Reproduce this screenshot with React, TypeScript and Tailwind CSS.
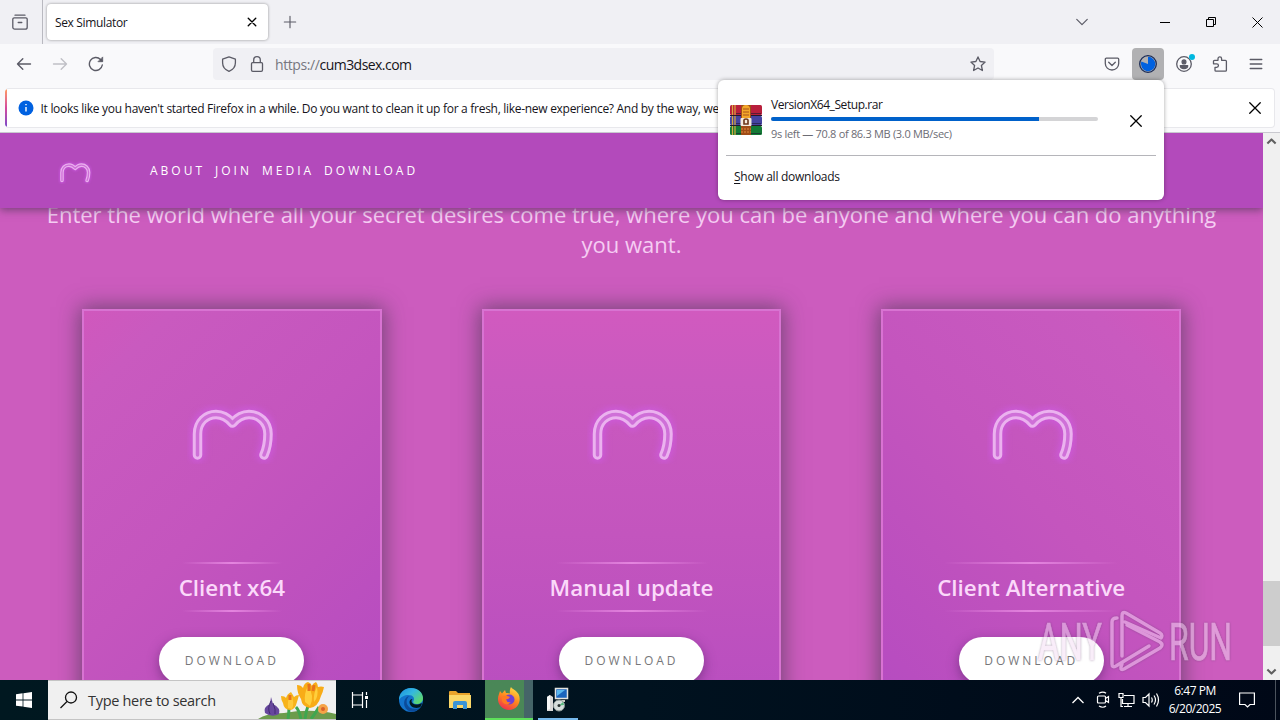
import type { ReactNode } from 'react'

const LINKS = ['ABOUT', 'JOIN', 'MEDIA', 'DOWNLOAD']

const CARDS = [
  {
    title: 'Client x64',
    bg: 'bg-[linear-gradient(135deg,#d058bd_0%,#c95abf_12%,#c455be_45%,#be51be_65%,#b84dc0_85%,#b24cc0_100%)]',
    line: 'w-[100px]',
  },
  {
    title: 'Manual update',
    bg: 'bg-[linear-gradient(180deg,#d15abf_0%,#ca59bf_16%,#c355be_50%,#b54cc0_100%)]',
    line: 'w-[152px]',
  },
  {
    title: 'Client Alternative',
    bg: 'bg-[linear-gradient(225deg,#d058bd_0%,#c95abf_12%,#c455be_45%,#be51be_65%,#b84dc0_85%,#b24cc0_100%)]',
    line: 'w-[174px]',
  },
]

export default function App() {
  return (
    <div className="relative flex h-[720px] w-[1280px] flex-col overflow-hidden bg-[#f9f9fb] font-['Open_Sans','Noto_Sans',sans-serif] text-[12px] text-[#15141a]">
      <TabBar />
      <Toolbar />
      <Notice />
      <div className="flex h-[547px] shrink-0">
        <Site />
        <Scrollbar />
      </div>
      <Taskbar />
      <DownloadPanel />
      <Watermark />
    </div>
  )
}

function Icon({ children, className = '', size = 16 }: { children: ReactNode; className?: string; size?: number }) {
  return (
    <svg
      width={size}
      height={size}
      viewBox="0 0 16 16"
      fill="none"
      stroke="currentColor"
      strokeWidth="1.3"
      strokeLinecap="round"
      strokeLinejoin="round"
      className={`shrink-0 ${className}`}
    >
      {children}
    </svg>
  )
}

function TabBar() {
  return (
    <header className="flex h-11 shrink-0 items-center bg-[#f0f0f4] text-[#5b5b66]">
      <div className="flex h-full w-[43px] items-center justify-center border-r border-[#b9b9c0]">
        <Icon className="mr-0.5">
          <path d="M3 1.200h10M2.200 3.800h11.600a1.400 1.400 0 0 1 1.400 1.400v8a2 2 0 0 1-2 2H2.800a2 2 0 0 1-2-2v-8a1.400 1.400 0 0 1 1.400-1.400zM6.200 8.500h3.600" />
        </Icon>
      </div>
      <div className="ml-1 flex h-9 w-[221px] items-center justify-between rounded bg-white pl-2 pr-[11px] text-[#15141a] shadow-[0_0_3px_rgba(0,0,0,0.4)]">
        <span className="pt-0.5 tracking-[-0.35px]">Sex Simulator</span>
        <Icon size={10} className="text-black">
          <path strokeWidth="2.200" d="M2 2l12 12M14 2L2 14" />
        </Icon>
      </div>
      <Icon size={14} className="ml-[15px]">
        <path d="M8 1.500v13M1.500 8h13" />
      </Icon>
      <Icon size={14} className="ml-auto mr-[53px]">
        <path strokeWidth="1.400" d="M2 5l6 6 6-6" />
      </Icon>
      <div className="flex h-full text-black">
        <div className="flex w-[46px] items-center justify-center">
          <div className="h-px w-2.5 bg-black" />
        </div>
        <div className="flex w-[46px] items-center justify-center">
          <svg width="10" height="10" fill="none" stroke="currentColor">
            <path d="M.5 2.500h7v7h-7zM2.500 2.500v-2h7v7h-2" />
          </svg>
        </div>
        <div className="flex w-[46px] items-center justify-center">
          <svg width="11" height="11" fill="none" stroke="currentColor">
            <path d="M.5.5l10 10M10.500.5l-10 10" />
          </svg>
        </div>
      </div>
    </header>
  )
}

function ToolButton({ children, active = false }: { children: ReactNode; active?: boolean }) {
  return (
    <div className="flex h-8 w-9 items-center justify-center">
      <div className={`relative flex h-8 w-8 items-center justify-center rounded ${active ? 'bg-[#b1b1b3]' : ''}`}>{children}</div>
    </div>
  )
}

function Toolbar() {
  return (
    <div className="flex h-10 shrink-0 items-center bg-[#f9f9fb] px-1.5 text-[#5b5b66]">
      <ToolButton>
        <Icon>
          <path strokeWidth="1.400" d="M14.500 8h-13M6.800 2.700L1.500 8l5.300 5.300" />
        </Icon>
      </ToolButton>
      <ToolButton>
        <Icon className="text-[#c0c0c6]">
          <path strokeWidth="1.400" d="M1.500 8h13M9.200 2.700L14.500 8l-5.300 5.300" />
        </Icon>
      </ToolButton>
      <ToolButton>
        <Icon>
          <path strokeWidth="1.400" d="M14.300 9a6.500 6.500 0 1 1-1.800-5.600l1.600 1.600" />
          <path fill="currentColor" strokeWidth=".8" d="M14.700 1.300v4.400h-4.400z" />
        </Icon>
      </ToolButton>
      <div className="ml-[99px] flex h-8 w-[781px] items-center rounded bg-[#f0f0f4] px-2">
        <Icon>
          <path d="M8 .9l6.400 2.300v3.500c0 3.800-2.400 7-6.400 8.600-4-1.600-6.400-4.800-6.400-8.600V3.200z" />
        </Icon>
        <Icon className="ml-3">
          <path d="M3.500 6.700h9a1 1 0 0 1 1 1V14a1.300 1.300 0 0 1-1.300 1.300H3.800A1.300 1.300 0 0 1 2.500 14V7.700a1 1 0 0 1 1-1zM4.700 6.500V4a3.300 3.300 0 0 1 6.600 0v2.500" />
        </Icon>
        <span className="ml-2.5 pt-px text-[14px] tracking-[-0.55px] text-[#77777f]">
          <span className="tracking-[-0.4px]">https://</span>
          <span className="text-[#15141a]">cum3dsex.com</span>
        </span>
        <Icon className="ml-auto">
          <path d="M8 .9l2.100 4.600 5 .6-3.700 3.400 1 5L8 12l-4.400 2.500 1-5L.9 6.100l5-.6z" />
        </Icon>
      </div>
      <div className="ml-auto flex">
        <ToolButton>
          <Icon>
            <path d="M2.300 2.200h11.400a1 1 0 0 1 1 1v4.300a6.700 6.500 0 0 1-13.400 0V3.200a1 1 0 0 1 1-1zM4.700 6.300L8 9.500l3.300-3.200" />
          </Icon>
        </ToolButton>
        <ToolButton active>
          <svg width="20" height="20" viewBox="0 0 20 20">
            <circle cx="10" cy="10" r="8.300" fill="#b1b1b3" stroke="#1b2b55" strokeWidth="1.300" />
            <path d="M10 10V2.800A7.200 7.200 0 1 1 3.300 7.600z" fill="#0061e0" />
          </svg>
        </ToolButton>
        <ToolButton>
          <Icon>
            <circle cx="8" cy="8" r="7.300" />
            <circle cx="8" cy="5.900" r="1.900" fill="currentColor" />
            <path fill="currentColor" d="M4.300 9.700h7.400c0 1.600-1.500 2.800-3.700 2.800s-3.700-1.200-3.700-2.800z" />
          </Icon>
          <span className="absolute right-[5px] top-1.5 h-1.5 w-1.5 rounded-full bg-[#00b8e0]" />
        </ToolButton>
        <ToolButton>
          <Icon>
            <path d="M6 4.300V2.700a1.800 1.800 0 0 1 3.600 0v1.600h3.800a1 1 0 0 1 1 1v8.900a1 1 0 0 1-1 1H4a1 1 0 0 1-1-1v-2.900h1.700a1.700 1.700 0 0 0 0-3.500H1.500V5.300a1 1 0 0 1 1-1z" />
          </Icon>
        </ToolButton>
        <ToolButton>
          <Icon>
            <path d="M2.200 3.500h11.600M2.200 8h11.600M2.200 12.500h11.600" />
          </Icon>
        </ToolButton>
      </div>
    </div>
  )
}

function Notice() {
  return (
    <div className="h-[49px] shrink-0 border-b border-[#c9c9cf] px-[5px] pt-1">
      <div className="flex h-[40px] items-center overflow-hidden rounded border border-l-0 border-[#e8e8ec] bg-white">
        <div className="h-full w-0.5 bg-linear-to-b from-[#ff9a5c] via-[#d4479c] to-[#7a45c8]" />
        <svg width="16" height="16" className="ml-[11px] shrink-0">
          <circle cx="8" cy="8" r="7.500" fill="#0061e0" />
          <path d="M8 7v4.500M8 4v1.300" stroke="white" strokeWidth="1.400" />
        </svg>
        <span className="ml-[6.500px] w-[760px] overflow-hidden pt-0.5 tracking-[-0.29px] whitespace-nowrap">
          It looks like you haven't started Firefox in a while. Do you want to clean it up for a fresh, like-new experience? And by the way, welcome back!
        </span>
        <Icon size={14} className="ml-auto mr-3 text-black">
          <path strokeWidth="1.500" d="M2 2l12 12M14 2L2 14" />
        </Icon>
      </div>
    </div>
  )
}

function Logo({ className }: { className: string }) {
  const arch = 'M10.500 51V30C10.500 18 19 10.500 29 10.500 37 10.500 42 15 45.500 19 49 15 54 10.500 62 10.500 72 10.500 81 18 81 30q0 12-4 21'

  return (
    <svg viewBox="0 0 90 60" fill="none" strokeLinecap="round" strokeLinejoin="round" className={className}>
      <path d={arch} stroke="#cf5be8" strokeOpacity=".6" strokeWidth="15" className="blur-[3px]" />
      <path d={arch} stroke="#ebb2ef" strokeWidth="9.500" className="blur-[0.600px]" />
      <path d={arch} stroke="#cf70d8" strokeWidth="3.500" className="blur-[0.500px]" />
    </svg>
  )
}

function Site() {
  return (
    <main className="w-[1263px] overflow-hidden bg-[#cc5cbe]">
      <nav className="relative z-10 flex h-[75px] items-center bg-[#b34abb] shadow-[0_2px_8px_rgba(70,50,80,0.65)]">
        <Logo className="ml-[58px] mt-[3px] h-[23px] w-[34px]" />
        <div className="ml-[58px] flex gap-2.5 text-[12px] tracking-[3px] text-white">
          {LINKS.map((link) => (
            <span key={link}>{link}</span>
          ))}
        </div>
      </nav>

      <p className="-mt-[9px] text-center text-[22px] leading-[30px] text-[#f5cdf3]">
        Enter the world where all your secret desires come true, where you can be anyone and where you can do anything
        <br />
        you want.
      </p>

      <div className="mt-[50px] flex gap-[100px] pl-[82px]">
        {CARDS.map((card) => (
          <section
            key={card.title}
            className={`flex h-[450px] w-[299.700px] shrink-0 flex-col items-center border-2 border-[#d873d2] shadow-[0_0_20px_2px_rgba(65,55,75,0.65)] ${card.bg}`}
          >
            <Logo className="mt-[93px] ml-px h-[60px] w-[90px]" />
            <div className={`mt-[98px] h-0.5 bg-linear-to-r from-transparent via-[#e485df] to-transparent ${card.line}`} />
            <h2 className="h-[46px] text-[22.400px] leading-[48px] font-semibold text-[#fbd9fa]">{card.title}</h2>
            <div className={`h-0.5 bg-linear-to-r from-transparent via-[#e485df] to-transparent ${card.line}`} />
            <button className="mt-[25px] h-[47px] w-[145px] rounded-full bg-white text-[12px] tracking-[3px] text-[#77777a] shadow-[0_4px_12px_rgba(70,30,90,0.5)]">
              DOWNLOAD
            </button>
          </section>
        ))}
      </div>
    </main>
  )
}

function Scrollbar() {
  return (
    <div className="flex w-[17px] flex-col items-center bg-[#f0f0f0] text-[#606060]">
      <Icon size={11} className="mt-[3px]">
        <path strokeWidth="3" strokeLinecap="butt" d="M2 11l6-6 6 6" />
      </Icon>
      <div className="mt-[434px] h-[65px] w-full bg-[#cdcdcd]" />
      <Icon size={11} className="mt-auto mb-[3px]">
        <path strokeWidth="3" strokeLinecap="butt" d="M2 5l6 6 6-6" />
      </Icon>
    </div>
  )
}

function DownloadPanel() {
  return (
    <div className="absolute left-[718px] top-20 z-30 h-[120px] w-[446px] rounded-md bg-white px-2 shadow-[0_0_4px_rgba(0,0,0,0.35)]">
      <div className="flex h-[76px] items-center border-b border-[#b5b5ba] pl-1">
        <RarIcon />
        <div className="ml-[9px] w-[327px] pt-[3px]">
          <p className="leading-[17px] tracking-[-0.42px]">VersionX64_Setup.rar</p>
          <div className="mt-1 h-1 rounded-full bg-[#d4d4d6]">
            <div className="h-1 w-[82%] rounded-l-full bg-[#0061ca]" />
          </div>
          <p className="mt-[5px] text-[11px] leading-[16px] tracking-[-0.31px] text-[#6c6c74]">9s left — 70.8 of 86.3 MB (3.0 MB/sec)</p>
        </div>
        <Icon size={14} className="ml-[31px] mt-1.5 text-black">
          <path strokeWidth="1.500" d="M2 2l12 12M14 2L2 14" />
        </Icon>
      </div>
      <p className="pl-2 pt-3 tracking-[-0.27px]">
        <span className="underline underline-offset-2">S</span>how all downloads
      </p>
    </div>
  )
}

function RarIcon() {
  return (
    <svg width="32" height="32" viewBox="0 0 32 32" className="mt-1 shrink-0">
      <rect x="0" y="1" width="32" height="10" rx="1.500" fill="#b81f3c" />
      <rect x="0" y="12" width="32" height="9" rx="1.500" fill="#4543a0" />
      <rect x="0" y="22" width="32" height="9" rx="1.500" fill="#147a36" />
      <path d="M6 9.500h25M6 19.500h25M6 29.500h25" stroke="#1d1730" strokeOpacity=".6" />
      <path d="M0 11.500h32M0 21.500h32" stroke="#231a2c" />
      <path d="M2.500 1v10M5 1v10M2.500 12v9M5 12v9M2.500 22v9M5 22v9" stroke="#d8a93d" strokeWidth="1.200" />
      <rect x="11" y="1" width="10" height="30" fill="#9f4c18" />
      <path d="M12 5q0-4 4-4t4 4v10h-8z" fill="#f3a72a" />
      <path d="M13 5h6M13 8h6M13 11h6" stroke="#a8501a" />
      <rect x="10.500" y="14" width="11" height="8" rx="1" fill="#f4ece0" />
      <path d="M14 20v-4q0-1 2-1t2 1v4z" fill="none" stroke="#6b3519" strokeWidth="1.600" />
      <path d="M11 25h10M11 28h10" stroke="#e08a3c" strokeDasharray="2 1" />
    </svg>
  )
}

function Watermark() {
  return (
    <svg
      width="200"
      height="68"
      viewBox="0 0 200 68"
      className="absolute left-[1038px] top-[608px] z-20 overflow-visible opacity-50 drop-shadow-[0_0_1px_rgba(90,60,100,0.9)]"
    >
      <g fill="#f4dcf4" stroke="#f4dcf4" strokeWidth=".7" fontFamily="Roboto" fontSize="52" fontWeight="400">
        <text x="0" y="52" textLength="64" lengthAdjust="spacingAndGlyphs">ANY</text>
        <text x="131" y="52" textLength="63" lengthAdjust="spacingAndGlyphs">RUN</text>
      </g>
      <g fill="none" stroke="#f8d8f6" strokeWidth="3.500" strokeLinecap="round" strokeLinejoin="round">
        <path d="M79 10q-5 0-5 4v42q0 4 4 2l33-20" />
        <path d="M84 48V8q0-5 4-3l34 20q3 2 1 5L87 14" />
        <path d="M84 56q-3 7 2 5l36-21q4-3 0-6L89 17" />
      </g>
    </svg>
  )
}

function TaskButton({ children, className = '' }: { children: ReactNode; className?: string }) {
  return <div className={`flex h-10 w-12 shrink-0 items-center justify-center ${className}`}>{children}</div>
}

function Taskbar() {
  return (
    <footer className="flex h-10 shrink-0 bg-linear-to-r from-[#001820] via-[#00121f] to-[#000817] text-white">
      <TaskButton>
        <svg width="16" height="16" viewBox="0 0 16 16" fill="white">
          <path d="M0 2.200l6.600-.9v6.200H0zM7.400 1.200L16 0v7.500H7.400zM0 8.400h6.600v6.200L0 13.700zM7.400 8.400H16V16l-8.600-1.200z" />
        </svg>
      </TaskButton>
      <div className="flex w-72 items-center border-y border-[#c4c4c4] bg-[#f0f0f0] pl-3 text-[#333]">
        <svg width="18" height="18" fill="none" stroke="#111" strokeWidth="1.300">
          <circle cx="11" cy="6.500" r="5.500" />
          <path d="M7 10.500L.5 17" />
        </svg>
        <span className="ml-2.5 pt-0.5 text-[14.500px] tracking-[-0.3px]">Type here to search</span>
        <Flowers />
      </div>
      <TaskButton>
        <svg width="18" height="18" fill="none" stroke="white" strokeWidth="1.200">
          <path d="M1.500 1v3h10V1M1.500 4v10M11.500 4v10M1.500 17v-3h10v3M15.500 1v3M15.500 9v8" />
          <path d="M15.500 5v3" strokeWidth="3" />
        </svg>
      </TaskButton>
      <TaskButton className="ml-[3px]">
        <svg width="26" height="26" viewBox="0 0 26 26">
          <defs>
            <linearGradient id="edgeTop" x1="0" y1="0" x2="1" y2=".7">
              <stop offset="0" stopColor="#1a8fe0" />
              <stop offset=".5" stopColor="#34b7e0" />
              <stop offset="1" stopColor="#5fd96a" />
            </linearGradient>
          </defs>
          <circle cx="13" cy="13" r="12" fill="#1273cc" />
          <path d="M1 13C1 6 6 1 13 1c7 0 12 4.800 12 10 0 4-3 6-6.500 6-3 0-4-1.500-3-3 1.500-2.500 0-6-5-6-4 0-8 2-9.500 5z" fill="url(#edgeTop)" />
          <path d="M12 9c-3 1-4 5-3 8 1.500 4.500 7 6 12.500 4C17 26.500 9 26 6.500 19 5 14 8 9 12 9z" fill="#0b4b9a" />
          <path d="M14.500 12c-2 1.500-1 5 3.500 5.500 2 0 4-.6 5.500-1.600.8.600 0 3.500-2 4.600-6 1.500-10-1.500-10-5.500 0-1.500 1-3 3-3z" fill="#001820" />
        </svg>
      </TaskButton>
      <TaskButton className="ml-px">
        <svg width="22" height="20" viewBox="0 0 22 20">
          <path d="M0 2q0-1 1-1h6l2 2h12v15H0z" fill="#e9a32b" />
          <path d="M0 5h22v13H0z" fill="#fbd768" />
          <path d="M4 19v-6q0-2 2-2h10q2 0 2 2v6h-4v-4H8v4z" fill="#3a94d6" />
        </svg>
      </TaskButton>
      <TaskButton className="ml-px border-b-2 border-[#5ee05a] bg-linear-to-r from-[#4a8757] from-81% to-[#456468] to-81%">
        <svg width="24" height="24" viewBox="0 0 24 24">
          <defs>
            <linearGradient id="fox" x1=".8" y1="0" x2=".3" y2="1">
              <stop offset="0" stopColor="#ffe14a" />
              <stop offset=".5" stopColor="#ff8a1e" />
              <stop offset="1" stopColor="#f0304e" />
            </linearGradient>
          </defs>
          <path d="M14 0c1 2 5 3 7.500 7 2 4 1.500 9-1.500 12.500-4 4.500-12 4.500-16 0C.5 16 .3 11 2 7l1-3 2 2.500L8 3l1 3c1.500-.2 3 0 4 .5-.5-2 0-5 1-6.500z" fill="url(#fox)" />
          <circle cx="12.500" cy="12.500" r="5" fill="#7040d5" />
          <path d="M5 10q3-2.500 8 0-1 2-4 2.500 1 3.500 5 2.500-3 3.500-7 1.500-3-2-2-6.500z" fill="#ff7a22" />
        </svg>
      </TaskButton>
      <TaskButton className="ml-px">
        <div className="flex h-10 w-10 items-center justify-center border-b-2 border-[#76b9ed] pt-0.5">
          <InstallerIcon />
        </div>
      </TaskButton>
      <div className="ml-auto flex items-center">
        <svg width="12" height="8" fill="none" stroke="white" strokeWidth="1.300">
          <path d="M.5 7L6 1.500 11.500 7" />
        </svg>
        <svg width="14" height="18" fill="none" stroke="white" strokeWidth="1.200" className="ml-3">
          <path d="M2.500 5h6q1 0 1 1v5q0 1-1 1h-6q-1 0-1-1V6q0-1 1-1zM9.500 7.500l3-2v6l-3-2M3 2.300q4-2.500 7 0M3 15q4 2.500 7 0" />
        </svg>
        <svg width="17" height="16" fill="none" stroke="white" strokeWidth="1.200" className="ml-2">
          <path d="M6 3.500h10v8H4.500V7M10 11.500v3M6 14.500h8M1 1.500h4v4H1zM3 5.500v9h2" />
        </svg>
        <svg width="18" height="16" fill="none" stroke="white" strokeWidth="1.200" className="ml-[7px]">
          <path d="M1 5.500h2.500L7 2v12l-3.500-3.500H1zM9.500 5.500q1.500 2.500 0 5M12 3.500q3 4.500 0 9M14.500 1.500q4 6.500 0 13" />
        </svg>
        <div className="ml-[7px] w-[56px] text-center text-[12px] leading-[18px] tracking-[-0.48px] whitespace-nowrap">
          <p>6:47 PM</p>
          <p>6/20/2025</p>
        </div>
        <svg width="16" height="16" fill="none" stroke="white" strokeWidth="1.200" className="ml-4">
          <path d="M.6 1h14.800v11.500H11L8.500 15 6 12.500H.6z" />
        </svg>
        <div className="ml-5 mr-1 h-10 w-px bg-[#4b535d]" />
      </div>
    </footer>
  )
}

function InstallerIcon() {
  return (
    <svg width="24" height="26" viewBox="0 0 24 26">
      <path d="M1 10l3-2 3 2v14H1z" fill="#d9d9d9" />
      <path d="M1 10l3-2v14l-3 1z" fill="#f7f7f7" />
      <rect x="9.500" y="1.500" width="12" height="10" fill="#1b65bd" stroke="#e4e4e0" strokeWidth="1.500" />
      <path d="M11 9l8-6H11z" fill="#59b7ef" />
      <path d="M13 13h6v2h-6z" fill="#c9c9c2" />
      <circle cx="13" cy="18.500" r="5.500" fill="#d6dedd" stroke="#8b9694" />
      <path d="M13 18.500l4-3.500 1 3z" fill="#53b97c" />
      <circle cx="13" cy="18.500" r="1.500" fill="#26302f" />
    </svg>
  )
}

function Flowers() {
  return (
    <svg width="80" height="38" viewBox="0 0 80 38" className="ml-auto">
      <path d="M2 38q8-6 26-6 28-5 52 1v5z" fill="#6c9b4c" />
      <path d="M32 38q1-6 1-12M49 38q1-8 3-13M45 38q-2-9-5-12M55 38q4-5 8-12" fill="none" stroke="#3fa650" strokeWidth="3" />
      <path d="M15 16l2 7q8 4 6 10-7 4-14-1-2-6 5-9z" fill="#67479d" />
      <path d="M15 20q-4 7-1 13M17 22q3 7 2 11" fill="none" stroke="#432b72" />
      <path d="M25 15q4 0 5 2 1-4 5-6 2 3 3 5 2-2 5-2-1 4-2 7-2 8-7 8-6 0-7-7-2-3-2-7z" fill="#f7b31a" />
      <path d="M35 13q-4 6-3 14l4 1q3-6-1-15z" fill="#ffc93a" />
      <path d="M41 4q4 0 6 3 1-5 5-6 3 1 4 4 1-3 4-4 2 2 2 5 3-1 6 0-1 5-3 9-3 11-11 12-8-1-9-9-4-6-4-14z" fill="#f8ac17" />
      <path d="M52 5q-4 7-3 16l5 4q5-10-2-20zM61 6q-4 7-3 15 5-5 3-15z" fill="#ffcf3c" />
      <path d="M53 3v7M58 4l-1 6M34 14v5" stroke="#e8721b" strokeWidth="3" />
      <circle cx="67" cy="28" r="5" fill="#f5a347" />
      <circle cx="67" cy="28" r="2" fill="#d8612a" />
    </svg>
  )
}
